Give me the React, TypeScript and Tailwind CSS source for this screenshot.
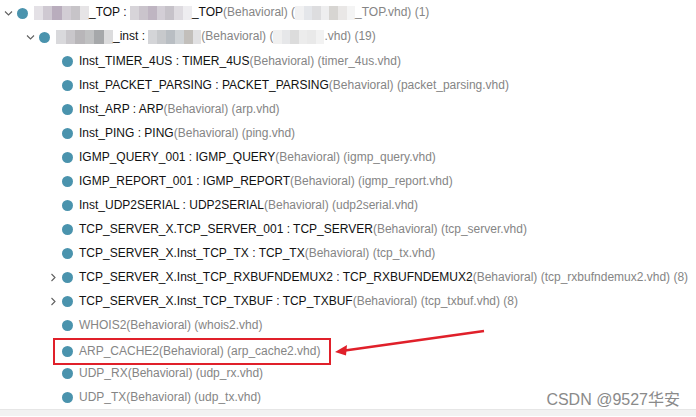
import React from "react";

type Row = {
	level: number;
	expand?: "open" | "closed";
	name?: React.ReactNode;
	rest: React.ReactNode;
	muted?: boolean;
	boxed?: boolean;
};

// pixelated blur over the redacted names
function Mosaic({ cells, w }: { cells: string[]; w: string }) {
	return (
		<span className={`inline-flex items-center h-[14px] align-middle ${w}`}>
			{cells.map((c, i) => (
				<span key={i} className="inline-block flex-1 h-[14px]" style={{ background: c }} />
			))}
		</span>
	);
}

const topName = ["#e4e1e6", "#cfc9d2", "#b9adbd", "#d2cdd4", "#c7c4c8", "#e6e4e6"];
const topType = ["#d7d4d9", "#cac4cc", "#bfb5c2", "#d3ced6", "#c6c2c9", "#dedbe0", "#eeedf0"];
const topFile = ["#f1f1f2", "#e4e6ea", "#dddddf", "#eeeeef", "#d7d5d2", "#e9e7e6", "#f4f4f4"];
const instName = ["#d9d9dc", "#c9c7cb", "#b8b6b9", "#c0c1c2", "#a6a8aa", "#dcdcdd"];
const instType = ["#d4d5d8", "#c7c9cc", "#b9bec3", "#cfd3d6", "#c2bfbb", "#e1e1e3"];
const instFile = ["#f0f0f0", "#e6e7e9", "#dcdcdc", "#ececec", "#e9e9e9", "#f2f2f2"];

const rows: Row[] = [
	{
		level: 0,
		expand: "open",
		name: (
			<>
				<Mosaic cells={topName} w="w-[55px]" />
				_TOP : <Mosaic cells={topType} w="w-[62px]" />
				_TOP
			</>
		),
		rest: (
			<>
				(Behavioral) (<Mosaic cells={topFile} w="w-[60px]" />
				_TOP.vhd) (1)
			</>
		),
	},
	{
		level: 1,
		expand: "open",
		name: (
			<>
				<Mosaic cells={instName} w="w-[57px]" />
				_inst : <Mosaic cells={instType} w="w-[53px]" />
			</>
		),
		rest: (
			<>
				(Behavioral) (<Mosaic cells={instFile} w="w-[51px]" />
				.vhd) (19)
			</>
		),
	},
	{ level: 2, name: "Inst_TIMER_4US : TIMER_4US", rest: "(Behavioral) (timer_4us.vhd)" },
	{ level: 2, name: "Inst_PACKET_PARSING : PACKET_PARSING", rest: "(Behavioral) (packet_parsing.vhd)" },
	{ level: 2, name: "Inst_ARP : ARP", rest: "(Behavioral) (arp.vhd)" },
	{ level: 2, name: "Inst_PING : PING", rest: "(Behavioral) (ping.vhd)" },
	{ level: 2, name: "IGMP_QUERY_001 : IGMP_QUERY", rest: "(Behavioral) (igmp_query.vhd)" },
	{ level: 2, name: "IGMP_REPORT_001 : IGMP_REPORT", rest: "(Behavioral) (igmp_report.vhd)" },
	{ level: 2, name: "Inst_UDP2SERIAL : UDP2SERIAL", rest: "(Behavioral) (udp2serial.vhd)" },
	{ level: 2, name: "TCP_SERVER_X.TCP_SERVER_001 : TCP_SERVER", rest: "(Behavioral) (tcp_server.vhd)" },
	{ level: 2, name: "TCP_SERVER_X.Inst_TCP_TX : TCP_TX", rest: "(Behavioral) (tcp_tx.vhd)" },
	{
		level: 2,
		expand: "closed",
		name: "TCP_SERVER_X.Inst_TCP_RXBUFNDEMUX2 : TCP_RXBUFNDEMUX2",
		rest: "(Behavioral) (tcp_rxbufndemux2.vhd) (8)",
	},
	{
		level: 2,
		expand: "closed",
		name: "TCP_SERVER_X.Inst_TCP_TXBUF : TCP_TXBUF",
		rest: "(Behavioral) (tcp_txbuf.vhd) (8)",
	},
	{ level: 2, muted: true, rest: "WHOIS2(Behavioral) (whois2.vhd)" },
	{ level: 2, muted: true, boxed: true, rest: "ARP_CACHE2(Behavioral) (arp_cache2.vhd)" },
	{ level: 2, muted: true, rest: "UDP_RX(Behavioral) (udp_rx.vhd)" },
	{ level: 2, muted: true, rest: "UDP_TX(Behavioral) (udp_tx.vhd)" },
];

const indent = ["pl-[2px]", "pl-[24px]", "pl-[47px]"];

function Chevron({ dir }: { dir: "open" | "closed" }) {
	return (
		<svg width="9" height="9" viewBox="0 0 9 9" className="shrink-0">
			{dir === "open" ? (
				<path d="M1 2.5 L4.5 6 L8 2.5" fill="none" stroke="#606060" strokeWidth="1.1" />
			) : (
				<path d="M2.5 1 L6 4.5 L2.5 8" fill="none" stroke="#606060" strokeWidth="1.1" />
			)}
		</svg>
	);
}

function TreeRow({ row }: { row: Row }) {
	return (
		<div className={`h-6 flex items-center ${indent[row.level]}`}>
			<div className="w-[12px] flex items-center justify-center shrink-0">
				{row.expand && <Chevron dir={row.expand} />}
			</div>
			<div
				className={`flex items-center h-[25px] ${
					row.boxed ? "outline-2 outline-[#e0202a] -outline-offset-1 translate-y-[2px] pl-[5px] pr-[10px] -ml-[5px]" : ""
				}`}
			>
				<span className="w-[11px] h-[11px] rounded-full bg-[#4a93ad] ml-[3px] mr-[6px] shrink-0" />
				<span className="whitespace-nowrap text-[12px] leading-none">
					{row.name && <span className="text-[#111]">{row.name}</span>}
					<span className="text-[#858585]">{row.rest}</span>
				</span>
			</div>
		</div>
	);
}

export default function App() {
	return (
		<div className="relative w-[696px] h-[417px] bg-white overflow-hidden font-['Liberation_Sans',Arial,sans-serif]">
			<div className="pt-px">
				{rows.map((r, i) => (
					<TreeRow key={i} row={r} />
				))}
			</div>
			<div className="h-[7px] bg-[#f2f2f2] border-t border-[#e6e6e6]" />

			{/* annotation arrow */}
			<svg className="absolute left-0 top-0 pointer-events-none" width="696" height="417">
				<line x1="484" y1="331" x2="345" y2="350.5" stroke="#e0202a" strokeWidth="2.5" />
				<path d="M335 352 L347 345 L346 355.5 Z" fill="#e0202a" />
			</svg>

			<div className="absolute right-[16px] bottom-[9px] text-[16px] leading-none text-[#8a8a8a] font-['Liberation_Sans','Noto_Sans_CJK_SC',sans-serif]">
				CSDN @9527华安
			</div>
		</div>
	);
}
